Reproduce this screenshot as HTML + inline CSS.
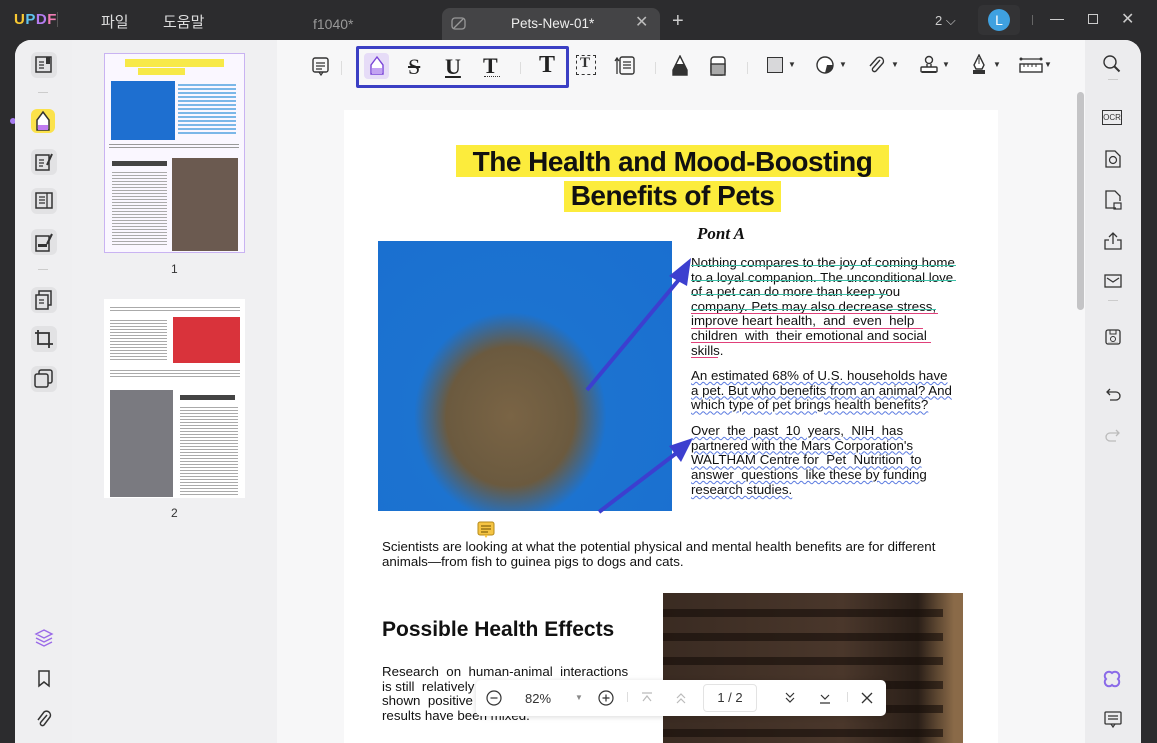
<!DOCTYPE html>
<html><head><meta charset="utf-8"><style>
*{margin:0;padding:0;box-sizing:border-box}
body{width:1157px;height:743px;background:#2c2c2e;position:relative;overflow:hidden;font-family:"Liberation Sans","Noto Sans CJK KR",sans-serif}
.abs{position:absolute}
.tb{color:#ddd;font-size:15px}
.win{left:15px;top:40px;width:1126px;height:703px;background:#f7f7f8;border-radius:16px 16px 0 0;overflow:hidden}
.ls{left:0;top:0;width:57px;height:703px;background:#efeff1}
.th{left:57px;top:0;width:205px;height:703px;background:#f0f0f2}
.rs{left:1070px;top:0;width:56px;height:703px;background:#ececee}
.ic{position:absolute;width:26px;height:26px;border-radius:6px;background:#e2e2e4}
svg{position:absolute}
.pg{left:329px;top:70px;width:654px;height:650px;background:#fff}
.t{position:absolute;font-size:13.3px;color:#111;line-height:15px;white-space:nowrap}
</style></head><body>
<div class="abs" style="left:14px;top:11px;font-weight:bold;font-size:15px;letter-spacing:0.5px"><span style="color:#f9c932">U</span><span style="color:#5ec3f0">P</span><span style="color:#b57cf0">D</span><span style="color:#f07cb4">F</span></div>
<div class="abs" style="left:57px;top:12px;width:1px;height:15px;background:#555"></div>
<div class="abs tb" style="left:101px;top:11px">파일</div>
<div class="abs tb" style="left:163px;top:11px">도움말</div>
<div class="abs" style="left:313px;top:16px;color:#999;font-size:14px">f1040*</div>
<div class="abs" style="left:442px;top:8px;width:218px;height:32px;background:#444446;border-radius:8px 8px 0 0"></div>
<svg style="left:450px;top:16px" width="18" height="16"><rect x="2" y="2" width="13" height="11" rx="3" fill="none" stroke="#999" stroke-width="1.3"/><path d="M4 12 L13 3" stroke="#999" stroke-width="1.3"/></svg>
<div class="abs" style="left:511px;top:16px;color:#eee;font-size:13.5px">Pets-New-01*</div>
<div class="abs" style="left:635px;top:12px;color:#bbb;font-size:16px">✕</div>
<div class="abs" style="left:672px;top:10px;color:#ccc;font-size:20px">+</div>
<div class="abs" style="left:935px;top:13px;color:#ccc;font-size:13px">2 ⌵</div>
<div class="abs" style="left:978px;top:5px;width:42px;height:30px;background:#333335;border-radius:5px"></div>
<div class="abs" style="left:988px;top:9px;width:22px;height:22px;border-radius:50%;background:#3fa1e0;color:#fff;font-size:14px;text-align:center;line-height:22px">L</div>
<div class="abs" style="left:1032px;top:15px;width:1px;height:10px;background:#666"></div>
<div class="abs" style="left:1050px;top:19px;width:14px;height:1px;background:#ccc"></div>
<div class="abs" style="left:1088px;top:14px;width:10px;height:10px;border:1.3px solid #ccc"></div>
<div class="abs" style="left:1121px;top:9px;color:#ccc;font-size:16px">✕</div>
<div class="abs" style="left:10px;top:118px;width:6px;height:6px;border-radius:50%;background:#a67cf0"></div>

<div class="abs win">
 <div class="abs ls">
  <div class="ic" style="left:16px;top:12px"></div>
  <svg style="left:20px;top:15px" width="18" height="20"><rect x="1" y="2" width="15" height="15" fill="none" stroke="#333" stroke-width="1.5"/><path d="M4 7h5M4 10h5M4 13h5" stroke="#333" stroke-width="1.3"/><rect x="11" y="2" width="4" height="7" fill="#333"/></svg>
  <div class="abs" style="left:23px;top:52px;width:10px;height:1px;background:#ccc"></div>
  <div class="ic" style="left:16px;top:69px;background:#fbe24b;width:24px;height:24px"></div>
  <svg style="left:19px;top:70px" width="18" height="22"><path d="M9 2 L15 10 L15 20 L3 20 L3 10 Z" fill="#fff" stroke="#333" stroke-width="1.5"/><rect x="4" y="15" width="10" height="5" fill="#c07cf0"/></svg>
  <div class="ic" style="left:16px;top:109px"></div>
  <svg style="left:20px;top:112px" width="20" height="20"><rect x="1" y="3" width="13" height="15" fill="none" stroke="#333" stroke-width="1.5"/><path d="M4 8h5M4 11h5M4 14h4" stroke="#333" stroke-width="1.3"/><path d="M12 13 L17 2" stroke="#333" stroke-width="2"/></svg>
  <div class="ic" style="left:16px;top:148px"></div>
  <svg style="left:20px;top:151px" width="20" height="20"><rect x="1" y="2" width="16" height="15" fill="none" stroke="#333" stroke-width="1.5"/><path d="M4 6h6M4 9h6M4 12h6M12 2v15" stroke="#333" stroke-width="1.3"/></svg>
  <div class="ic" style="left:16px;top:189px"></div>
  <svg style="left:20px;top:192px" width="20" height="22"><rect x="1" y="4" width="13" height="15" fill="none" stroke="#333" stroke-width="1.5"/><rect x="3" y="12" width="9" height="3" fill="#333"/><path d="M12 12 L17 2" stroke="#333" stroke-width="2"/></svg>
  <div class="abs" style="left:23px;top:229px;width:10px;height:1px;background:#ccc"></div>
  <div class="ic" style="left:16px;top:247px"></div>
  <svg style="left:20px;top:250px" width="20" height="20"><rect x="4" y="1" width="12" height="14" fill="none" stroke="#333" stroke-width="1.5"/><rect x="1" y="5" width="12" height="14" fill="#e2e2e4" stroke="#333" stroke-width="1.5"/><path d="M4 10h5M4 13h5" stroke="#333" stroke-width="1.3"/></svg>
  <div class="ic" style="left:16px;top:286px"></div>
  <svg style="left:19px;top:289px" width="20" height="20"><path d="M4 1v14h15M1 4h14v15" fill="none" stroke="#333" stroke-width="1.8"/></svg>
  <div class="ic" style="left:16px;top:326px"></div>
  <svg style="left:19px;top:329px" width="20" height="20"><rect x="5" y="1" width="13" height="13" rx="2" fill="none" stroke="#333" stroke-width="1.5"/><rect x="1" y="5" width="13" height="13" rx="2" fill="#e2e2e4" stroke="#333" stroke-width="1.5"/></svg>
  <svg style="left:19px;top:588px" width="20" height="20"><path d="M10 2 L18 6 L10 10 L2 6 Z M2 10 L10 14 L18 10 M2 14 L10 18 L18 14" fill="none" stroke="#9a6ae8" stroke-width="1.4"/></svg>
  <svg style="left:22px;top:630px" width="14" height="18"><path d="M2 1h10v15l-5-4-5 4z" fill="none" stroke="#333" stroke-width="1.5"/></svg>
  <svg style="left:21px;top:670px" width="16" height="18"><path d="M11 5 L5 12 a2 2 0 0 0 3 3 L14 7 a4 4 0 0 0 -6 -5 L2 10" fill="none" stroke="#333" stroke-width="1.5"/></svg>
 </div>
 <div class="abs th">
  <div class="abs" style="left:32px;top:13px;width:141px;height:200px;background:#faf7ff;border:1px solid #c9b3f2"></div>
  <div class="abs" style="left:53px;top:19px;width:99px;height:8px;background:#f7e948"></div>
  <div class="abs" style="left:66px;top:28px;width:47px;height:7px;background:#f7e948"></div>
  <div class="abs" style="left:39px;top:41px;width:64px;height:59px;background:#1e6fd0"></div>
  <div class="abs" style="left:106px;top:44px;width:58px;height:52px;background:repeating-linear-gradient(#7bb7e8 0 2px,transparent 2px 4px)"></div>
  <div class="abs" style="left:37px;top:104px;width:130px;height:6px;background:repeating-linear-gradient(#999 0 1px,transparent 1px 3px)"></div>
  <div class="abs" style="left:40px;top:121px;width:55px;height:5px;background:#444"></div>
  <div class="abs" style="left:40px;top:132px;width:55px;height:75px;background:repeating-linear-gradient(#aaa 0 1px,transparent 1px 3px)"></div>
  <div class="abs" style="left:100px;top:118px;width:66px;height:93px;background:#6b5a50"></div>
  <div class="abs" style="left:99px;top:222px;font-size:12px;color:#333">1</div>
  <div class="abs" style="left:32px;top:259px;width:141px;height:199px;background:#fff"></div>
  <div class="abs" style="left:38px;top:267px;width:130px;height:6px;background:repeating-linear-gradient(#aaa 0 1px,transparent 1px 3px)"></div>
  <div class="abs" style="left:38px;top:280px;width:57px;height:40px;background:repeating-linear-gradient(#aaa 0 1px,transparent 1px 3px)"></div>
  <div class="abs" style="left:101px;top:277px;width:67px;height:46px;background:#d9333b"></div>
  <div class="abs" style="left:38px;top:330px;width:130px;height:8px;background:repeating-linear-gradient(#aaa 0 1px,transparent 1px 3px)"></div>
  <div class="abs" style="left:38px;top:350px;width:63px;height:107px;background:#7a7a80"></div>
  <div class="abs" style="left:108px;top:355px;width:55px;height:5px;background:#444"></div>
  <div class="abs" style="left:108px;top:367px;width:58px;height:88px;background:repeating-linear-gradient(#aaa 0 1px,transparent 1px 3px)"></div>
  <div class="abs" style="left:99px;top:466px;font-size:12px;color:#333">2</div>
 </div>
 <svg style="left:296px;top:16px" width="20" height="22"><rect x="2" y="2" width="15" height="14" rx="2" fill="none" stroke="#333" stroke-width="1.4"/><path d="M5 7h9M5 10h9M5 13h6" stroke="#333" stroke-width="1.2"/><path d="M8 16l2 3 2-3" fill="none" stroke="#333" stroke-width="1.2"/></svg>
 <div class="abs" style="left:326px;top:21px;width:1px;height:14px;background:#ddd"></div>
 <div class="abs" style="left:341px;top:6px;width:213px;height:42px;border:3px solid #3b3fc4;border-radius:2px"></div>
 <div class="abs" style="left:349px;top:13px;width:25px;height:26px;background:#e6dcf7;border-radius:4px"></div>
 <svg style="left:353px;top:15px" width="18" height="22"><path d="M9 2 L15 10 L15 19 L3 19 L3 10 Z" fill="#fff" stroke="#7a45d8" stroke-width="1.4"/><rect x="4" y="13" width="10" height="6" fill="#c3a3f2"/></svg>
 <div class="abs" style="left:393px;top:14px;font-family:'Liberation Serif',serif;font-size:22px;color:#222;text-decoration:line-through">S</div>
 <div class="abs" style="left:430px;top:14px;font-family:'Liberation Serif',serif;font-size:22px;color:#222;font-weight:bold;text-decoration:underline">U</div>
 <div class="abs" style="left:468px;top:13px;font-family:'Liberation Serif',serif;font-size:22px;color:#222;font-weight:bold">T</div>
 <div class="abs" style="left:469px;top:35px;width:16px;height:2px;border-bottom:1.5px dotted #333"></div>
 <div class="abs" style="left:505px;top:22px;width:1px;height:12px;background:#ddd"></div>
 <div class="abs" style="left:524px;top:12px;font-family:'Liberation Serif',serif;font-size:24px;color:#222;font-weight:bold">T</div>
 <div class="abs" style="left:561px;top:15px;width:20px;height:20px;border:1.3px dashed #333"></div>
 <div class="abs" style="left:565px;top:15px;font-family:'Liberation Serif',serif;font-size:15px;font-weight:bold;color:#333">T</div>
 <svg style="left:599px;top:15px" width="22" height="22"><rect x="6" y="2" width="14" height="17" rx="2" fill="none" stroke="#333" stroke-width="1.4"/><path d="M9 7h8M9 10h8M9 13h8M3 4v15M1 6l2-3 2 3" fill="none" stroke="#333" stroke-width="1.3"/></svg>
 <div class="abs" style="left:640px;top:22px;width:1px;height:12px;background:#ddd"></div>
 <svg style="left:656px;top:15px" width="18" height="22"><path d="M9 1 L16 15 V20 H2 V15 Z" fill="#fff" stroke="#333" stroke-width="1.4"/><path d="M5 9 L13 9 L16 15 V20 H2 V15 Z" fill="#333"/></svg>
 <svg style="left:694px;top:16px" width="18" height="20"><rect x="2" y="1" width="14" height="18" rx="3" fill="#fff" stroke="#333" stroke-width="1.4"/><rect x="2" y="8" width="14" height="11" fill="#aaa" stroke="#333" stroke-width="1.4"/></svg>
 <div class="abs" style="left:732px;top:22px;width:1px;height:12px;background:#ddd"></div>
 <div class="abs" style="left:752px;top:17px;width:16px;height:16px;background:#d8d8da;border:1.3px solid #333"></div>
 <div class="abs" style="left:773px;top:20px;font-size:8px;color:#333">▼</div>
 <svg style="left:800px;top:15px" width="20" height="20"><circle cx="10" cy="10" r="8" fill="#fff" stroke="#333" stroke-width="1.4"/><path d="M10 18 A8 8 0 0 0 18 10 L12 10 Z" fill="#333"/></svg>
 <div class="abs" style="left:824px;top:20px;font-size:8px;color:#333">▼</div>
 <svg style="left:852px;top:15px" width="20" height="20"><path d="M13 5 L6 13 a2 2 0 0 0 3 3 L16 8 a4 4 0 0 0 -6 -5 L3 11" fill="none" stroke="#333" stroke-width="1.4"/></svg>
 <div class="abs" style="left:876px;top:20px;font-size:8px;color:#333">▼</div>
 <svg style="left:904px;top:15px" width="20" height="20"><circle cx="10" cy="5" r="3.5" fill="none" stroke="#333" stroke-width="1.4"/><path d="M8 9v3M12 9v3" stroke="#333" stroke-width="1.4"/><rect x="2" y="12" width="16" height="5" rx="1" fill="#fff" stroke="#333" stroke-width="1.4"/><rect x="3" y="16" width="14" height="2" fill="#333"/></svg>
 <div class="abs" style="left:927px;top:20px;font-size:8px;color:#333">▼</div>
 <svg style="left:955px;top:14px" width="18" height="22"><path d="M9 1 L14 11 L12 15 H6 L4 11 Z" fill="#fff" stroke="#333" stroke-width="1.4"/><path d="M9 4v6" stroke="#333"/><rect x="3" y="16" width="12" height="4" fill="#333"/></svg>
 <div class="abs" style="left:978px;top:20px;font-size:8px;color:#333">▼</div>
 <svg style="left:1004px;top:17px" width="24" height="18"><path d="M2 2h20" stroke="#333" stroke-width="1.2"/><circle cx="2" cy="2" r="1.5" fill="#333"/><circle cx="22" cy="2" r="1.5" fill="#333"/><rect x="1" y="7" width="22" height="8" fill="#fff" stroke="#333" stroke-width="1.4"/><path d="M5 7v3M9 7v3M13 7v3M17 7v3" stroke="#333"/></svg>
 <div class="abs" style="left:1029px;top:20px;font-size:8px;color:#333">▼</div>
 <div class="abs" style="left:1062px;top:52px;width:7px;height:218px;background:#c4c4c6;border-radius:4px"></div>

 <div class="abs pg">
  <div class="abs" style="left:112px;top:35px;width:433px;height:32px;background:#fcec3c"></div>
  <div class="abs" style="left:220px;top:71px;width:217px;height:31px;background:#fcec3c"></div>
  <div class="t" style="left:112px;top:36px;width:433px;text-align:center;font-size:28px;font-weight:bold;line-height:32px;letter-spacing:-0.5px">The Health and Mood-Boosting</div>
  <div class="t" style="left:112px;top:70px;width:433px;text-align:center;font-size:28px;font-weight:bold;line-height:32px;letter-spacing:-0.5px">Benefits of Pets</div>
  <div class="t" style="left:353px;top:116px;font-family:'Liberation Serif',serif;font-style:italic;font-weight:bold;font-size:17px">Pont A</div>
  <div class="abs" style="left:34px;top:131px;width:294px;height:270px;background:radial-gradient(ellipse at 45% 65%,#7a6445 0%,#6b5a3f 28%,#1c73d0 42%,#1a6fd0 100%)"></div>
  <svg style="left:225px;top:140px" width="130" height="270"><path d="M18 140 L118 20" stroke="#3c3fcf" stroke-width="4"/><path d="M122 8 L100 26 L118 36Z" fill="#3c3fcf"/><path d="M30 262 L118 195" stroke="#3c3fcf" stroke-width="4"/><path d="M124 188 L100 196 L112 212Z" fill="#3c3fcf"/></svg>
  <div class="t" style="left:347px;top:146px;line-height:14.6px">Nothing compares to the joy of coming home<br>to a loyal companion. The unconditional love<br>of a pet can do more than keep you<br>company. Pets may also decrease stress,<br>improve heart health,&nbsp; and&nbsp; even&nbsp; help<br>children&nbsp; with&nbsp; their emotional and social<br>skills.</div>
  <div class="abs" style="left:347px;top:155px;width:265px;height:1px;background:#3dbfa7"></div>
  <div class="abs" style="left:347px;top:170px;width:265px;height:1px;background:#3dbfa7"></div>
  <div class="abs" style="left:347px;top:184px;width:197px;height:1px;background:#3dbfa7"></div>
  <div class="abs" style="left:347px;top:199px;width:245px;height:1px;background:#3dbfa7"></div>
  <div class="abs" style="left:347px;top:203px;width:247px;height:1px;background:#e0407a"></div>
  <div class="abs" style="left:347px;top:218px;width:232px;height:1px;background:#e0407a"></div>
  <div class="abs" style="left:347px;top:232px;width:240px;height:1px;background:#e0407a"></div>
  <div class="abs" style="left:347px;top:247px;width:27px;height:1px;background:#e0407a"></div>
  <div class="t" style="left:347px;top:259px;line-height:14.7px;text-decoration:underline wavy #5a7ae0 1px">An estimated 68% of U.S. households have<br>a pet. But who benefits from an animal? And<br>which type of pet brings health benefits?</div>
  <div class="t" style="left:347px;top:314px;line-height:14.7px;text-decoration:underline wavy #5a7ae0 1px">Over&nbsp; the&nbsp; past&nbsp; 10&nbsp; years,&nbsp; NIH&nbsp; has<br>partnered with the Mars Corporation's<br>WALTHAM Centre for&nbsp; Pet&nbsp; Nutrition&nbsp; to<br>answer&nbsp; questions&nbsp; like these by funding<br>research studies.</div>
  <svg style="left:133px;top:411px" width="18" height="18"><rect x="1" y="1" width="16" height="13" rx="2" fill="#f5c443" stroke="#b58a1a"/><path d="M4 5h10M4 8h10M4 11h7" stroke="#6b4e00"/><path d="M7 14l2 3 2-3" fill="#f5c443"/></svg>
  <div class="t" style="left:38px;top:429px;line-height:15px">Scientists are looking at what the potential physical and mental health benefits are for different<br>animals—from fish to guinea pigs to dogs and cats.</div>
  <div class="abs" style="left:319px;top:483px;width:300px;height:170px;background:linear-gradient(90deg,#3a2b22,#4a372b 60%,#2a1f18 85%,#8a6a48 97%)"></div>
  <div class="abs" style="left:319px;top:483px;width:280px;height:170px;background:repeating-linear-gradient(transparent 0 16px,rgba(20,12,8,.6) 16px 24px)"></div>
  <div class="t" style="left:38px;top:508px;font-weight:bold;font-size:21px;line-height:24px">Possible Health Effects</div>
  <div class="t" style="left:38px;top:555px;line-height:14.7px">Research&nbsp; on&nbsp; human-animal&nbsp; interactions<br>is still&nbsp; relatively<br>shown&nbsp; positive<br>results have been mixed.</div>
 </div>
 <div class="abs" style="left:461px;top:640px;width:410px;height:36px;background:#fff;border-radius:5px;box-shadow:0 1px 6px rgba(0,0,0,.15)"></div>
 <svg style="left:471px;top:650px" width="16" height="16"><circle cx="8" cy="8" r="7" fill="none" stroke="#333" stroke-width="1.2"/><path d="M4.5 8h7" stroke="#333" stroke-width="1.2"/></svg>
 <div class="abs" style="left:510px;top:651px;font-size:13px;color:#333">82%</div>
 <div class="abs" style="left:560px;top:653px;font-size:8px;color:#888">▼</div>
 <svg style="left:583px;top:650px" width="16" height="16"><circle cx="8" cy="8" r="7" fill="none" stroke="#333" stroke-width="1.2"/><path d="M4.5 8h7M8 4.5v7" stroke="#333" stroke-width="1.2"/></svg>
 <div class="abs" style="left:612px;top:652px;width:1px;height:10px;background:#ddd"></div>
 <svg style="left:625px;top:651px" width="14" height="14"><path d="M2 2h10M3 10l4-5 4 5" fill="none" stroke="#bbb" stroke-width="1.2"/></svg>
 <svg style="left:659px;top:651px" width="14" height="14"><path d="M3 7l4-4 4 4M3 12l4-4 4 4" fill="none" stroke="#bbb" stroke-width="1.2"/></svg>
 <div class="abs" style="left:688px;top:644px;width:54px;height:28px;border:1px solid #e3e3e3;border-radius:4px;text-align:center;line-height:26px;font-size:13px;color:#333">1 / 2</div>
 <svg style="left:768px;top:651px" width="14" height="14"><path d="M3 2l4 4 4-4M3 7l4 4 4-4" fill="none" stroke="#333" stroke-width="1.2"/></svg>
 <svg style="left:803px;top:651px" width="14" height="14"><path d="M3 4l4 4 4-4M2 12h10" fill="none" stroke="#333" stroke-width="1.2"/></svg>
 <div class="abs" style="left:832px;top:652px;width:1px;height:10px;background:#ddd"></div>
 <svg style="left:845px;top:651px" width="14" height="14"><path d="M2 2l10 10M12 2L2 12" stroke="#333" stroke-width="1.3"/></svg>

 <div class="abs rs">
  <svg style="left:17px;top:14px" width="20" height="20"><circle cx="8" cy="8" r="6" fill="none" stroke="#333" stroke-width="1.4"/><path d="M12.5 12.5l5 5" stroke="#333" stroke-width="2"/></svg>
  <div class="abs" style="left:23px;top:39px;width:10px;height:1px;background:#ccc"></div>
  <div class="abs" style="left:17px;top:70px;width:20px;height:15px;border:1.2px solid #333;font-size:8px;text-align:center;line-height:13px;color:#333">OCR</div>
  <svg style="left:19px;top:109px" width="18" height="20"><path d="M2 2h9l5 5v11H2z" fill="none" stroke="#333" stroke-width="1.3"/><circle cx="9" cy="11" r="3.5" fill="none" stroke="#333" stroke-width="1.2"/></svg>
  <svg style="left:19px;top:149px" width="18" height="22"><path d="M12 19H2V2h9l5 5v5" fill="none" stroke="#333" stroke-width="1.3"/><rect x="10" y="14" width="7" height="6" fill="none" stroke="#333" stroke-width="1.2"/></svg>
  <svg style="left:18px;top:191px" width="20" height="20"><path d="M10 13V2M6 6l4-4 4 4M6 9H2v9h16V9h-4" fill="none" stroke="#333" stroke-width="1.3"/></svg>
  <svg style="left:18px;top:233px" width="20" height="16"><rect x="2" y="2" width="16" height="12" fill="none" stroke="#333" stroke-width="1.3"/><path d="M4 5l6 4 6-4" fill="none" stroke="#333" stroke-width="1.2"/></svg>
  <div class="abs" style="left:23px;top:260px;width:10px;height:1px;background:#ccc"></div>
  <svg style="left:19px;top:288px" width="18" height="18"><rect x="2" y="2" width="14" height="14" rx="2" fill="none" stroke="#333" stroke-width="1.3"/><circle cx="9" cy="11" r="2.5" fill="none" stroke="#333"/><path d="M6 2v4h6V2" fill="none" stroke="#333"/></svg>
  <div class="abs" style="left:23px;top:302px;width:10px;height:1px;background:#ccc"></div>
  <svg style="left:19px;top:346px" width="18" height="16"><path d="M3 6h9a4 4 0 0 1 0 8H6M6 3L3 6l3 3" fill="none" stroke="#333" stroke-width="1.3"/></svg>
  <svg style="left:19px;top:387px" width="18" height="16"><path d="M15 6H6a4 4 0 0 0 0 8h6M12 3l3 3-3 3" fill="none" stroke="#bbb" stroke-width="1.3"/></svg>
  <svg style="left:17px;top:629px" width="20" height="20"><path d="M10 4a4 4 0 1 1 6 6 4 4 0 1 1-6 6 4 4 0 1 1-6-6 4 4 0 1 1 6-6z" fill="none" stroke="#8a6ae8" stroke-width="2"/></svg>
  <svg style="left:18px;top:670px" width="20" height="20"><rect x="2" y="2" width="16" height="12" rx="1" fill="none" stroke="#333" stroke-width="1.3"/><path d="M5 6h10M5 9h10M8 14l2 3 2-3" fill="none" stroke="#333" stroke-width="1.2"/></svg>
 </div>
</div>
</body></html>
